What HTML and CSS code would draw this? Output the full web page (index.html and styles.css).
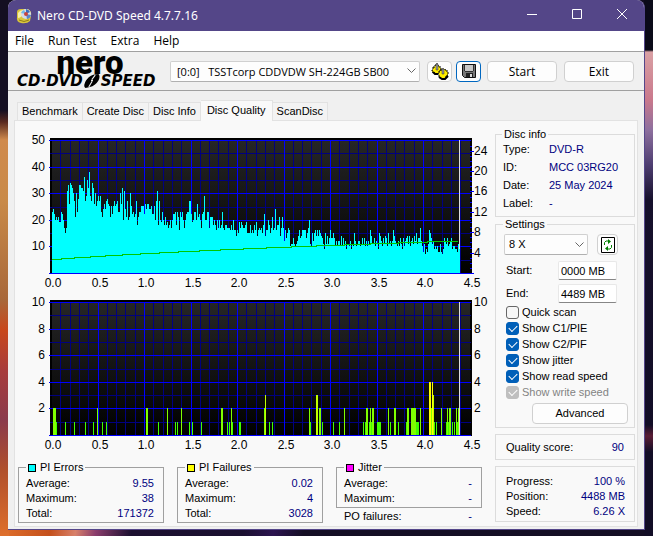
FILE: index.html
```html
<!DOCTYPE html>
<html lang="en">
<head>
    <meta charset="UTF-8">
    <meta name="viewport" content="width=device-width, initial-scale=1.0">
    <title>Nero CD-DVD Speed 4.7.7.16</title>
    <link rel="stylesheet" href="styles.css">
</head>
<body>
    <div class="window">
        <header class="titlebar">
            <svg class="app-icon" width="16" height="16" viewBox="0 0 16 16">
                <path d="M1 4 Q1 1 5 1 L12 1 Q16 3 15 8 L14 13 Q11 16 5 15 Q0 14 1 9 Z" fill="#d9c53c"/>
                <path d="M2 5 Q4 2 7 2 L6 8 Q4 10 2 10 Z" fill="#f6efae"/>
                <circle cx="10" cy="6" r="5" fill="#d4dbe8"/>
                <path d="M10 6 L5 5 A5 5 0 0 1 8 2 Z" fill="#6fb6e8"/>
                <path d="M10 6 L10 1 A5 5 0 0 1 14 4 Z" fill="#3c6fc0"/>
                <path d="M10 6 L15 7 A5 5 0 0 1 11 11 Z" fill="#5b86c8"/>
                <circle cx="10" cy="6" r="2" fill="#c8443c"/>
                <path d="M3 12 Q8 15 13 12" stroke="#8f7d18" fill="none"/>
            </svg>
            <h1>Nero CD-DVD Speed 4.7.7.16</h1>
            <div class="window-buttons">
                <button aria-label="Minimize"><svg width="10" height="10" viewBox="0 0 10 10"><path d="M0 5.5H10"/></svg></button>
                <button aria-label="Maximize"><svg width="10" height="10" viewBox="0 0 10 10"><path d="M.5 .5H9.5V9.5H.5Z"/></svg></button>
                <button aria-label="Close"><svg width="10" height="10" viewBox="0 0 10 10"><path d="M0 0L10 10M10 0L0 10"/></svg></button>
            </div>
        </header>

        <nav class="menu">
            <a href="#">File</a>
            <a href="#">Run Test</a>
            <a href="#">Extra</a>
            <a href="#">Help</a>
        </nav>

        <div class="toolbar">
            <div class="logo">
                <div class="logo-name">nero</div>
                <div class="logo-product">
                    <span>CD·DVD</span>
                    <svg width="18" height="14" viewBox="0 0 16 13">
                        <path d="M1 12 Q0 8 5 3 Q9 0 14 0 Q16 2 14 6 Q11 11 6 12 L2 13 Z" fill="#000"/>
                        <path d="M5 12 L8 7 M8 5 L11 1" stroke="#f0f0f0" stroke-width="1"/>
                        <circle cx="8" cy="6" r="1" fill="#f0f0f0"/>
                    </svg>
                    <span>SPEED</span>
                </div>
            </div>
            <div class="combo combo-drive">
                <select aria-label="Drive">
                    <option>[0:0] &nbsp; TSSTcorp CDDVDW SH-224GB SB00</option>
                </select>
                <svg width="9" height="6" viewBox="0 0 9 6"><path d="M.5 .5L4.5 4.5L8.5 .5"/></svg>
            </div>
            <button class="btn btn-icon" aria-label="Options">
                <svg width="18" height="17" viewBox="0 0 18 17">
                    <path d="M2 4H4V2H5V1H7V3H9V5H10V8H9V10H7V11H4V10H2V9H1V7H2Z" fill="#ffee00" stroke="#000" stroke-dasharray="2 1"/>
                    <path d="M9 7H11V6H14V7H16V9H17V12H16V14H14V16H11V15H9V14H8V11H7V9H9Z" fill="#ffee00" stroke="#000" stroke-dasharray="2 1"/>
                    <path d="M5 1H7V7H5ZM11 6H13V11H11Z" fill="#999" stroke="#333" stroke-width=".5"/>
                    <path d="M2 9L4 11H7M8 14L11 16H14L17 13" stroke="#000" stroke-width="2" fill="none"/>
                </svg>
            </button>
            <button class="btn btn-icon btn-focus" aria-label="Save">
                <svg width="14" height="14" viewBox="0 0 14 14">
                    <path d="M.5 .5H13.5V13.5H2.5L.5 11.5Z" fill="#777" stroke="#111"/>
                    <path d="M3 1H11V7H3Z" fill="#c8c8c8"/>
                    <path d="M3 7.5H11M2.5 1V7M11.5 1V7" stroke="#333"/>
                    <path d="M4 9H11V13H4Z" fill="#222"/>
                    <path d="M8 10H10V13H8Z" fill="#ddd"/>
                </svg>
            </button>
            <button class="btn btn-wide">Start</button>
            <button class="btn btn-wide">Exit</button>
        </div>

        <div class="tabs" role="tablist">
            <button class="tab" role="tab">Benchmark</button>
            <button class="tab" role="tab">Create Disc</button>
            <button class="tab" role="tab">Disc Info</button>
            <button class="tab tab-active" role="tab" aria-selected="true">Disc Quality</button>
            <button class="tab" role="tab">ScanDisc</button>
        </div>

        <main class="panel">
            <section class="results">
                <svg class="chart" id="pieChart" viewBox="0 0 475 162"></svg>
                <svg class="chart" id="pifChart" viewBox="0 0 475 162"></svg>

                <div class="stats">
                    <fieldset class="stat">
                        <legend><span class="swatch swatch-pie"></span>PI Errors</legend>
                        <dl>
                            <div><dt>Average:</dt><dd>9.55</dd></div>
                            <div><dt>Maximum:</dt><dd>38</dd></div>
                            <div><dt>Total:</dt><dd>171372</dd></div>
                        </dl>
                    </fieldset>
                    <fieldset class="stat">
                        <legend><span class="swatch swatch-pif"></span>PI Failures</legend>
                        <dl>
                            <div><dt>Average:</dt><dd>0.02</dd></div>
                            <div><dt>Maximum:</dt><dd>4</dd></div>
                            <div><dt>Total:</dt><dd>3028</dd></div>
                        </dl>
                    </fieldset>
                    <div>
                        <fieldset class="stat">
                            <legend><span class="swatch swatch-jitter"></span>Jitter</legend>
                            <dl>
                                <div><dt>Average:</dt><dd>-</dd></div>
                                <div><dt>Maximum:</dt><dd>-</dd></div>
                            </dl>
                        </fieldset>
                        <dl class="po-failures">
                            <div><dt>PO failures:</dt><dd>-</dd></div>
                        </dl>
                    </div>
                </div>
            </section>

            <aside class="side">
                <fieldset class="group disc-info">
                    <legend>Disc info</legend>
                    <dl>
                        <div><dt>Type:</dt><dd>DVD-R</dd></div>
                        <div><dt>ID:</dt><dd>MCC 03RG20</dd></div>
                        <div><dt>Date:</dt><dd>25 May 2024</dd></div>
                        <div><dt>Label:</dt><dd>-</dd></div>
                    </dl>
                </fieldset>

                <fieldset class="group settings">
                    <legend>Settings</legend>
                    <div class="speed-row">
                        <div class="combo">
                            <select aria-label="Speed"><option>8 X</option></select>
                            <svg width="9" height="6" viewBox="0 0 9 6"><path d="M.5 .5L4.5 4.5L8.5 .5"/></svg>
                        </div>
                        <button class="btn btn-refresh" aria-label="Refresh">
                            <svg width="14" height="16" viewBox="0 0 14 16">
                                <path d="M.5 .5H13.5V15.5H.5Z" fill="#fff" stroke="#000"/>
                                <path d="M3.5 8V5.5L5 4H8M10.5 8V10.5L9 12H6" fill="none" stroke="#008000"/>
                                <path d="M7 2L10 4.500L7 7ZM7 9L4 11.500L7 14Z" fill="#008000"/>
                            </svg>
                        </button>
                    </div>
                    <div class="field">
                        <label for="start">Start:</label>
                        <input type="text" id="start" value="0000 MB">
                    </div>
                    <div class="field">
                        <label for="end">End:</label>
                        <input type="text" id="end" value="4489 MB">
                    </div>
                    <div class="checks">
                        <label><input type="checkbox">Quick scan</label>
                        <label><input type="checkbox" checked>Show C1/PIE</label>
                        <label><input type="checkbox" checked>Show C2/PIF</label>
                        <label><input type="checkbox" checked>Show jitter</label>
                        <label><input type="checkbox" checked>Show read speed</label>
                        <label class="disabled"><input type="checkbox" checked disabled>Show write speed</label>
                    </div>
                    <button class="btn btn-advanced">Advanced</button>
                </fieldset>

                <dl class="group score">
                    <div><dt>Quality score:</dt><dd>90</dd></div>
                </dl>

                <dl class="group progress">
                    <div><dt>Progress:</dt><dd>100 %</dd></div>
                    <div><dt>Position:</dt><dd>4488 MB</dd></div>
                    <div><dt>Speed:</dt><dd>6.26 X</dd></div>
                </dl>
            </aside>
        </main>
    </div>

    <script src="charts.js"></script>
</body>
</html>
```
FILE: styles.css
```css
* {
    margin: 0;
    padding: 0;
    box-sizing: border-box;
}

html {
    min-height: 100%;
    background:
        linear-gradient(180deg, #0b0a18 0 50px, #d9a0a4 52px, #c9788c 100px, #8d6f9e 130px, #4d3d70 165px, #16102c 200px, #120d26 425px, #5a1c34 436px, #120d26 452px) right top / 9px 100% no-repeat,
        linear-gradient(180deg, #140f22 0 110px, #5a2a20 122px, #d08a4c 140px, #c98a48 200px, #a8683a 300px, #c8481c 330px, #a83c3c 370px, #8a3a4c 420px, #b0502c 470px, #e0702c 100%) left top / 9px 100% no-repeat,
        linear-gradient(100deg, #e0702c 0, #c4501c 50px, #d8806a 75px, #8a3c6c 95px, #1c1030 130px, #1a1030 240px, #2c1450 270px, #140e24 300px) left bottom / 100% 10px no-repeat,
        #120d20;
}

body {
    padding: 0 8px 8px;
    font-family: "Liberation Sans", Arial, sans-serif;
    font-size: 11px;
    line-height: 15px;
    color: #000;
}

button,
input,
select {
    font: inherit;
    color: inherit;
}

fieldset {
    min-width: 0;
}

.window {
    background: #f0f0f0;
    border-right: 1px solid #54468a;
    border-bottom: 1px solid #54468a;
    border-radius: 8px 8px 0 0;
    overflow: hidden;
}

/* title bar and menu */

.titlebar {
    display: flex;
    align-items: center;
    gap: 5px;
    height: 31px;
    padding-left: 8px;
    background: #544688;
    color: #fff;
}

.titlebar h1 {
    flex: 1;
    font-family: "Noto Sans", "Open Sans", sans-serif;
    font-size: 12px;
    font-weight: 400;
}

.window-buttons {
    display: flex;
}

.window-buttons button {
    width: 45px;
    height: 30px;
    background: none;
    border: 0;
}

.window-buttons path {
    fill: none;
    stroke: #fff;
}

.menu {
    display: flex;
    gap: 14px;
    height: 20px;
    padding-left: 7px;
    background: #fff;
    font-family: "Open Sans", "Noto Sans", sans-serif;
    font-size: 12px;
    line-height: 20px;
}

.menu a {
    color: #000;
    text-decoration: none;
}

/* toolbar */

.toolbar {
    display: flex;
    align-items: center;
    height: 40px;
    padding: 0 10px 0 9px;
    border-top: 1px solid #a0a0a0;
    border-bottom: 1px solid #a0a0a0;
}

.logo {
    width: 153px;
}

.logo-name {
    width: 146px;
    font-family: Roboto, "Liberation Sans", sans-serif;
    font-size: 33px;
    font-weight: 900;
    line-height: 20px;
    text-align: center;
}

.logo-product {
    display: flex;
    align-items: center;
    font-family: "DejaVu Sans", sans-serif;
    font-size: 15px;
    font-style: italic;
    font-weight: 700;
    line-height: 16px;
}

.combo {
    display: grid;
    align-items: center;
}

.combo select {
    grid-area: 1 / 1;
    width: 100%;
    height: 21px;
    padding: 0 20px 0 4px;
    appearance: none;
    background: #fdfdfd;
    border: 1px solid #d0d0d0;
    border-bottom-color: #b0b0b0;
    border-radius: 2px;
}

.combo svg {
    grid-area: 1 / 1;
    justify-self: end;
    margin-right: 4px;
    pointer-events: none;
}

.combo path {
    fill: none;
    stroke: #666;
}

.combo-drive {
    flex: 1;
    margin-right: 7px;
    font-family: "Open Sans", "Noto Sans", sans-serif;
}

.combo-drive select {
    padding-left: 6px;
}

.btn {
    display: flex;
    align-items: center;
    justify-content: center;
    height: 21px;
    background: #fdfdfd;
    border: 1px solid #d0d0d0;
    border-radius: 4px;
}

.btn-icon {
    width: 25px;
    margin-right: 4px;
}

.btn-focus {
    border-color: #0067c0;
    margin-right: 6px;
}

.btn-wide {
    width: 70px;
    font-family: "Open Sans", "Noto Sans", sans-serif;
    font-size: 12px;
}

.btn-wide + .btn-wide {
    margin-left: 7px;
}

/* tabs */

.tabs {
    display: flex;
    align-items: flex-end;
    padding: 9px 8px 0 9px;
}

.tab {
    height: 18px;
    padding: 0 4px;
    background: #f3f3f3;
    border: 1px solid #e2e2e2;
    border-bottom: 0;
}

.tab + .tab {
    border-left: 0;
}

.tab-active {
    height: 21px;
    margin-bottom: -1px;
    padding: 0 6px 2px;
    background: #f9f9f9;
    z-index: 1;
}

.panel {
    display: flex;
    gap: 2px;
    margin: 0 6px 2px;
    padding: 6px 2px 2px 3px;
    background: #f9f9f9;
    border: 1px solid #e2e2e2;
}

.results {
    flex: 1;
    min-width: 0;
    padding-top: 1px;
}

/* charts */

.chart {
    display: block;
    width: 100%;
    font-size: 12px;
}

.axis-left {
    text-anchor: end;
}

.axis-bottom {
    text-anchor: middle;
}

.plot {
    shape-rendering: crispEdges;
}

.grid-minor {
    stroke: #000080;
}

.grid-major {
    stroke: #0000ff;
}

.cursor {
    stroke: #dcdcdc;
}

.speed-line {
    fill: none;
    stroke: #00c800;
}

.errors {
    fill: #00ffff;
}

.level-1 {
    fill: #40ff00;
}

.level-2 {
    fill: #80ff00;
}

.level-3 {
    fill: #c0ff00;
}

.level-4 {
    fill: #ffff00;
}

/* result values */

dl div {
    display: flex;
    justify-content: space-between;
    white-space: nowrap;
}

dd {
    color: #000080;
}

.stats {
    display: grid;
    grid-template-columns: repeat(3, 1fr);
    align-items: start;
    gap: 13px;
    padding: 8px 11px 0 0;
}

.stat {
    padding: 1px 9px 1px 7px;
    border: 1px solid #a0a0a0;
}

.stat legend {
    display: flex;
    align-items: center;
    gap: 4px;
    padding: 0 2px;
}

.swatch {
    width: 8px;
    height: 8px;
    border: 1px solid #000;
}

.swatch-pie {
    background: #00ffff;
}

.swatch-pif {
    background: #ffff00;
}

.swatch-jitter {
    background: #ff00ff;
}

.po-failures {
    padding: 1px 10px 0 8px;
}

/* right column */

.side {
    width: 140px;
}

.group {
    border: 1px solid #dcdcdc;
}

.group legend {
    margin-left: -1px;
    padding: 0 2px;
}

.disc-info {
    padding: 0 7px 4px;
}

.disc-info dl {
    margin-top: -2px;
}

.disc-info div {
    justify-content: flex-start;
    line-height: 18px;
}

.disc-info dt {
    width: 46px;
}

.settings {
    padding: 2px 6px 3px 8px;
}

.speed-row {
    display: flex;
    gap: 9px;
    padding-bottom: 2px;
}

.speed-row .combo {
    width: 84px;
}

.btn-refresh {
    width: 21px;
}

.field {
    display: flex;
    align-items: center;
    justify-content: space-between;
    margin-top: 4px;
    padding: 0 11px 0 2px;
}

.field input {
    width: 59px;
    height: 19px;
    padding: 0 2px;
    background: #fff;
    border: 1px solid #e8e8e8;
    border-bottom-color: #868686;
    border-radius: 2px;
}

.checks {
    padding-top: 1px;
}

.checks label {
    display: flex;
    align-items: center;
    gap: 3px;
    height: 16px;
}

.checks .disabled {
    color: #838383;
}

.checks input {
    display: grid;
    place-items: center;
    width: 13px;
    height: 13px;
    margin-left: 2px;
    appearance: none;
    background: #f6f6f6;
    border: 1px solid #666;
    border-radius: 3px;
}

.checks input:checked {
    background: #005fb8;
    border-color: #005fb8;
}

.checks input:checked::before {
    content: '';
    width: 7px;
    height: 4px;
    margin-bottom: 2px;
    border-left: 1px solid #fff;
    border-bottom: 1px solid #fff;
    transform: rotate(-45deg);
}

.checks input:disabled {
    background: #bfbfbf;
    border-color: #bfbfbf;
}

.btn-advanced {
    width: 96px;
    margin: 3px 0 0 auto;
}

.score {
    margin-top: 6px;
    padding: 5px 10px 4px;
}

.progress {
    margin-top: 6px;
    padding: 7px 9px 2px 10px;
}
```
FILE: charts.js
```js
const LEFT = 34;
const RIGHT = 453;
const TOP = 12;
const BOTTOM = 145;
const GB_WIDTH = 93;

// PI errors, one value per column
const pie = [
    23,24,22,20,21,20,21,19,19,23,22,20,17,15,17,31,33,26,34,33,32,30,27,21,30,23,28,33,33,32,
    32,31,36,27,29,35,32,38,29,27,34,32,26,30,25,27,29,27,29,23,21,24,26,24,27,28,26,25,21,25,
    22,25,27,25,26,27,23,23,30,26,32,20,31,24,21,27,20,21,30,25,22,23,21,22,27,18,21,23,23,25,
    25,25,22,26,24,26,26,24,24,25,22,22,25,20,27,31,18,27,20,19,23,20,18,21,18,19,17,18,20,17,
    20,22,22,23,18,23,21,16,23,21,23,20,17,20,22,23,23,27,27,22,19,20,23,23,20,26,21,22,20,17,
    22,23,29,20,20,23,23,17,21,21,21,18,20,18,16,20,17,20,17,18,23,17,16,18,18,17,17,17,16,18,
    16,20,16,16,14,16,15,19,17,19,18,17,17,18,19,15,15,15,18,15,16,15,18,16,19,14,16,17,16,17,
    15,18,22,14,16,16,20,18,15,17,21,16,17,24,16,18,18,21,14,17,21,17,12,16,13,15,17,16,10,11,
    11,13,11,10,11,12,14,16,13,14,16,16,16,16,13,15,17,20,11,10,15,12,15,16,14,16,14,16,15,14,
    13,11,9,15,11,14,11,13,16,13,13,15,13,10,12,10,12,12,10,14,10,13,11,12,9,11,11,10,12,9,
    11,10,15,12,10,11,12,12,10,11,13,11,13,10,12,10,12,11,16,14,11,11,13,10,12,11,9,15,14,12,
    10,13,11,14,13,10,15,11,12,10,12,16,14,12,11,10,12,10,13,11,9,13,10,12,13,14,11,14,10,12,
    13,11,14,12,15,11,13,13,17,12,10,8,11,7,9,8,11,16,15,13,11,12,9,10,9,10,8,8,11,8,
    7,9,13,12,11,13,10,11,12,13,9,10,10,9,9,8,11,9
];

// PI failures as [column, width, level]
const pif = [
    [1,3,2],[4,1,1],[13,1,1],[22,1,1],[33,1,1],[41,1,1],[45,1,2],[50,1,1],[54,1,1],[94,2,2],
    [106,1,1],[115,1,2],[123,1,1],[125,1,1],[129,1,2],[137,1,1],[140,1,1],[149,1,1],[169,2,2],
    [175,1,1],[177,1,1],[179,1,2],[180,1,1],[187,2,1],[212,1,2],[213,1,3],[217,1,1],[220,1,1],
    [257,1,2],[258,1,1],[264,2,3],[267,2,2],[270,1,1],[281,1,1],[287,1,1],[292,1,2],[311,1,1],
    [313,1,1],[314,2,2],[317,1,1],[318,1,2],[319,1,1],[320,2,2],[325,4,1],[336,1,2],[338,1,1],
    [342,2,2],[346,1,1],[354,1,1],[355,2,2],[359,5,2],[364,3,1],[368,1,2],[377,2,4],[379,1,2],
    [380,1,4],[381,1,3],[382,1,1],[384,1,1],[389,1,2],[394,1,1],[395,1,2],[396,1,1],[397,2,2],
    [400,1,1],[402,1,1],[404,1,2],[405,1,1],[406,1,2]
];

// columns where the read speed curve rises by one pixel
const speedSteps = [0,9,22,38,53,70,88,107,126,147,168,191,214,239,264,292,318,346,375,406];

function rect(x, y, w, h, attrs) {
    return `<rect x="${x}" y="${y}" width="${w}" height="${h}" ${attrs}/>`;
}

function line(x1, y1, x2, y2, cls) {
    return `<path class="${cls}" d="M${x1} ${y1}L${x2} ${y2}"/>`;
}

function background(id) {
    let out = `<linearGradient id="${id}" x2="0" y2="1"><stop stop-color="#262626"/><stop offset="1" stop-color="#000"/></linearGradient>`;
    out += rect(32, 10, 422, 136, 'fill="#000"');
    out += rect(LEFT, TOP, RIGHT - LEFT - 1, BOTTOM - TOP, `fill="url(#${id})"`);

    for (const major of [false, true]) {
        const cls = major ? 'grid-major' : 'grid-minor';
        for (let i = 1; i < 45; i++) {
            if ((i % 5 === 0) !== major) continue;
            const x = LEFT + Math.round(i * GB_WIDTH / 10) - .5;
            out += line(x, TOP, x, BOTTOM, cls);
        }
        for (let i = 0; i <= 10; i++) {
            if ((i % 2 === 0) !== major) continue;
            const y = Math.round(BOTTOM - i * (BOTTOM - TOP) / 10) + .5;
            out += line(major ? 31 : 32, y, RIGHT, y, cls);
        }
    }
    return out;
}

function labels(leftMax, rightMax, rightStep, rightScale) {
    let out = '';
    for (let i = 1; i <= 5; i++) {
        const y = Math.round(BOTTOM - i * (BOTTOM - TOP) / 5) + 4;
        out += `<text class="axis-left" x="27" y="${y}">${leftMax / 5 * i}</text>`;
    }
    for (let v = rightStep; v <= rightMax; v += rightStep) {
        const y = Math.round(BOTTOM - v * rightScale) + 4;
        out += `<text x="456" y="${y}">${v}</text>`;
    }
    for (let i = 0; i <= 9; i++) {
        const x = Math.round(35 + i * GB_WIDTH / 2);
        out += `<text class="axis-bottom" x="${x}" y="159">${(i / 2).toFixed(1)}</text>`;
    }
    return out;
}

function drawPie() {
    const unit = (BOTTOM - TOP) / 50;
    let plot = background('pieFade');
    pie.forEach((value, i) => {
        const h = Math.round(value * unit);
        plot += rect(LEFT + i, BOTTOM - h, 1, h, 'class="errors"');
    });

    let y = 131.5;
    let d = `M${LEFT} ${y}`;
    speedSteps.slice(1).forEach((col, i) => {
        d += `H${LEFT + col}`;
        if (i < speedSteps.length - 2) d += `V${--y}`;
    });
    plot += `<path class="speed-line" d="${d}"/>`;
    plot += line(441.5, TOP, 441.5, BOTTOM - 24, 'cursor');

    for (let v = 0; v <= 25; v++) {
        const tick = Math.round(BOTTOM - v * 5.1) + .5;
        plot += line(452, tick, v % 4 === 0 ? 456 : 454, tick, 'grid-major');
    }
    document.getElementById('pieChart').innerHTML = `<g class="plot">${plot}</g>` + labels(50, 24, 4, 5.1);
}

function drawPif() {
    const unit = (BOTTOM - TOP) / 10;
    let plot = background('pifFade');
    pif.forEach(([col, width, level]) => {
        const h = Math.round(level * unit);
        plot += rect(LEFT + col, BOTTOM - h, width, h, `class="level-${level}"`);
    });
    plot += line(441.5, TOP, 441.5, BOTTOM, 'cursor');
    document.getElementById('pifChart').innerHTML = `<g class="plot">${plot}</g>` + labels(10, 10, 2, unit);
}

drawPie();
drawPif();
```
